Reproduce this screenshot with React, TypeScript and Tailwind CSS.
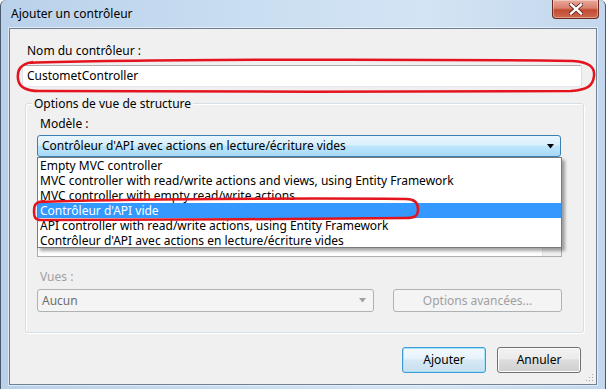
import React from 'react';

const items = [
  'Empty MVC controller',
  'MVC controller with read/write actions and views, using Entity Framework',
  'MVC controller with empty read/write actions',
  "Contrôleur d'API vide",
  'API controller with read/write actions, using Entity Framework',
  "Contrôleur d'API avec actions en lecture/écriture vides",
];

const Arrow: React.FC<{ color: string }> = ({ color }) => (
  <svg width="8" height="5" viewBox="0 0 8 5">
    <path d="M0 0 H7 L3.5 4.5 Z" fill={color} />
  </svg>
);

const CloseButton = () => (
  <div className="w-[47px] h-[19px] rounded-b-[4px] border border-t-0 border-[#6b2a22] bg-[linear-gradient(to_bottom,#e9a99b_0%,#d8806e_45%,#c24a32_55%,#d06a4f_100%)] flex items-center justify-center shadow-[inset_0_0_0_1px_rgba(255,255,255,0.35)]">
    <svg width="14" height="12" viewBox="0 0 14 12">
      <path d="M2 1.5 L12 10.5 M12 1.5 L2 10.5" stroke="#5a1e16" strokeWidth="4" strokeLinecap="square" />
      <path d="M2 1.5 L12 10.5 M12 1.5 L2 10.5" stroke="#ffffff" strokeWidth="2.4" strokeLinecap="square" />
    </svg>
  </div>
);

const Grip = () => (
  <svg width="10" height="10" viewBox="0 0 10 10" className="absolute right-[2px] bottom-[2px]">
    {[
      [8, 2], [8, 5], [5, 5], [8, 8], [5, 8], [2, 8],
    ].map(([x, y], i) => (
      <rect key={i} x={x} y={y} width="1" height="1" fill="#a8a8a8" />
    ))}
  </svg>
);

const Annotations = () => (
  <svg className="absolute inset-0 pointer-events-none" width="606" height="389" viewBox="0 0 606 389">
    <path
      d="M26 63 C140 59, 420 59, 572 61 C588 62, 594 67, 593 76 C592 86, 586 90, 570 91 C430 92, 170 92, 38 91 C24 91, 18 87, 17 79 C16 70, 19 64, 32 62"
      fill="none"
      stroke="#e3141d"
      strokeWidth="2.5"
    />
    <path
      d="M37 202 C120 199, 300 198, 405 199 C414 199, 417 203, 417 209 C417 216, 414 218, 405 218 C300 219, 120 220, 40 220 C34 220, 33 217, 33 211 C33 205, 34 202, 44 201"
      fill="none"
      stroke="#e3141d"
      strokeWidth="2.5"
    />
  </svg>
);

export default function App() {
  return (
    <div className="relative w-[606px] h-[389px] overflow-hidden font-['Noto_Sans',sans-serif] text-[12px] text-black bg-[linear-gradient(to_right,#b9d1ea,#cbdff2_45%,#d3e4f4_70%,#c2d7ed)] border-l border-r border-[#4a5a6c] rounded-tl-[6px] rounded-tr-[6px] flex flex-col px-[8px] pb-[4px]">
      {/* title bar */}
      <div className="h-[28px] flex justify-between shrink-0">
        <div className="pl-[2px] pt-[6px] leading-[15px]">Ajouter un contrôleur</div>
        <div className="mr-[-2px]">
          <CloseButton />
        </div>
      </div>

      {/* client area */}
      <div className="relative flex-1 bg-[#f0f0f0] border border-[#6f8093] shadow-[0_0_0_1px_rgba(255,255,255,0.5)] flex flex-col">
        <div className="ml-[17px] mt-[14px] h-[15px] leading-[15px]">Nom du contrôleur :</div>
        <div className="ml-[12px] mt-[7px] w-[560px] h-[22px] bg-white border border-[#abadb3] border-l-[#e2e3ea] border-r-[#dbdfe6] border-b-[#e3e9ef] rounded-[2px] flex items-center pl-[4px]">
          CustometController
        </div>

        {/* group box */}
        <div className="relative ml-[15px] mt-[16px] w-[559px] h-[230px] border border-[#d5dfe5] rounded-[3px] shadow-[inset_1px_1px_0_#ffffff,1px_1px_0_#ffffff] flex flex-col">
          <div className="absolute left-[6px] top-[-8px] px-[2px] bg-[#f0f0f0] leading-[15px]">Options de vue de structure</div>
          <div className="ml-[14px] mt-[12px] h-[15px] leading-[15px]">Modèle :</div>

          <div className="relative ml-[11px] mt-[4px] w-[525px]">
            <div className="h-[22px] w-[524px] rounded-[3px] border border-[#3c7fb1] bg-[linear-gradient(to_bottom,#eaf6fd_0%,#d9f0fc_45%,#bee6fd_50%,#a7d9f5_100%)] flex items-center justify-between pl-[4px] pr-[5px]">
              <span>Contrôleur d'API avec actions en lecture/écriture vides</span>
              <Arrow color="#000000" />
            </div>
            <div className="h-[100px] bg-white border border-[#abadb3] border-t-0 flex justify-end">
              <div className="w-[19px] bg-[#f0f0f0] border-l border-[#e6e6e6]" />
            </div>

            {/* open dropdown list */}
            <div className="absolute left-0 top-[22px] w-[525px] h-[91px] bg-white border border-[#7a7a7a] shadow-[3px_3px_3px_rgba(0,0,0,0.35)]">
              {items.map((t, i) => (
                <div
                  key={t}
                  className={
                    i === 3
                      ? 'h-[15px] leading-[15px] pl-[2px] bg-[#3399ff] text-white whitespace-nowrap'
                      : 'h-[15px] leading-[15px] pl-[2px] whitespace-nowrap'
                  }
                >
                  {t}
                </div>
              ))}
            </div>
          </div>

          <div className="ml-[14px] mt-[12px] h-[15px] leading-[15px] text-[#a0a0a0]">Vues :</div>
          <div className="ml-[11px] mt-[5px] flex">
            <div className="w-[337px] h-[23px] rounded-[3px] border border-[#adb2b5] bg-[#f4f4f4] flex items-center justify-between pl-[4px] pr-[6px] text-[#6d6d6d]">
              <span>Aucun</span>
              <Arrow color="#a0a0a0" />
            </div>
            <div className="ml-[19px] w-[169px] h-[23px] rounded-[3px] border border-[#adb2b5] bg-[#f4f4f4] flex items-center justify-center text-[#a0a0a0]">
              Options avancées...
            </div>
          </div>
        </div>

        {/* buttons */}
        <div className="mt-[14px] flex justify-end gap-[11px] pr-[15px]">
          <div className="w-[84px] h-[26px] rounded-[3px] border border-[#3c9bd6] shadow-[inset_0_0_0_1px_#a6e3fb] bg-[linear-gradient(to_bottom,#f2f9fd_0%,#e6f3fb_45%,#d6e9f5_50%,#c8dfee_100%)] flex items-center justify-center">
            Ajouter
          </div>
          <div className="w-[84px] h-[26px] rounded-[3px] border border-[#707070] shadow-[inset_0_0_0_1px_#fcfcfc] bg-[linear-gradient(to_bottom,#f2f2f2_0%,#ebebeb_45%,#dddddd_50%,#cfcfcf_100%)] flex items-center justify-center">
            Annuler
          </div>
        </div>
        <Grip />
      </div>
      <Annotations />
    </div>
  );
}
